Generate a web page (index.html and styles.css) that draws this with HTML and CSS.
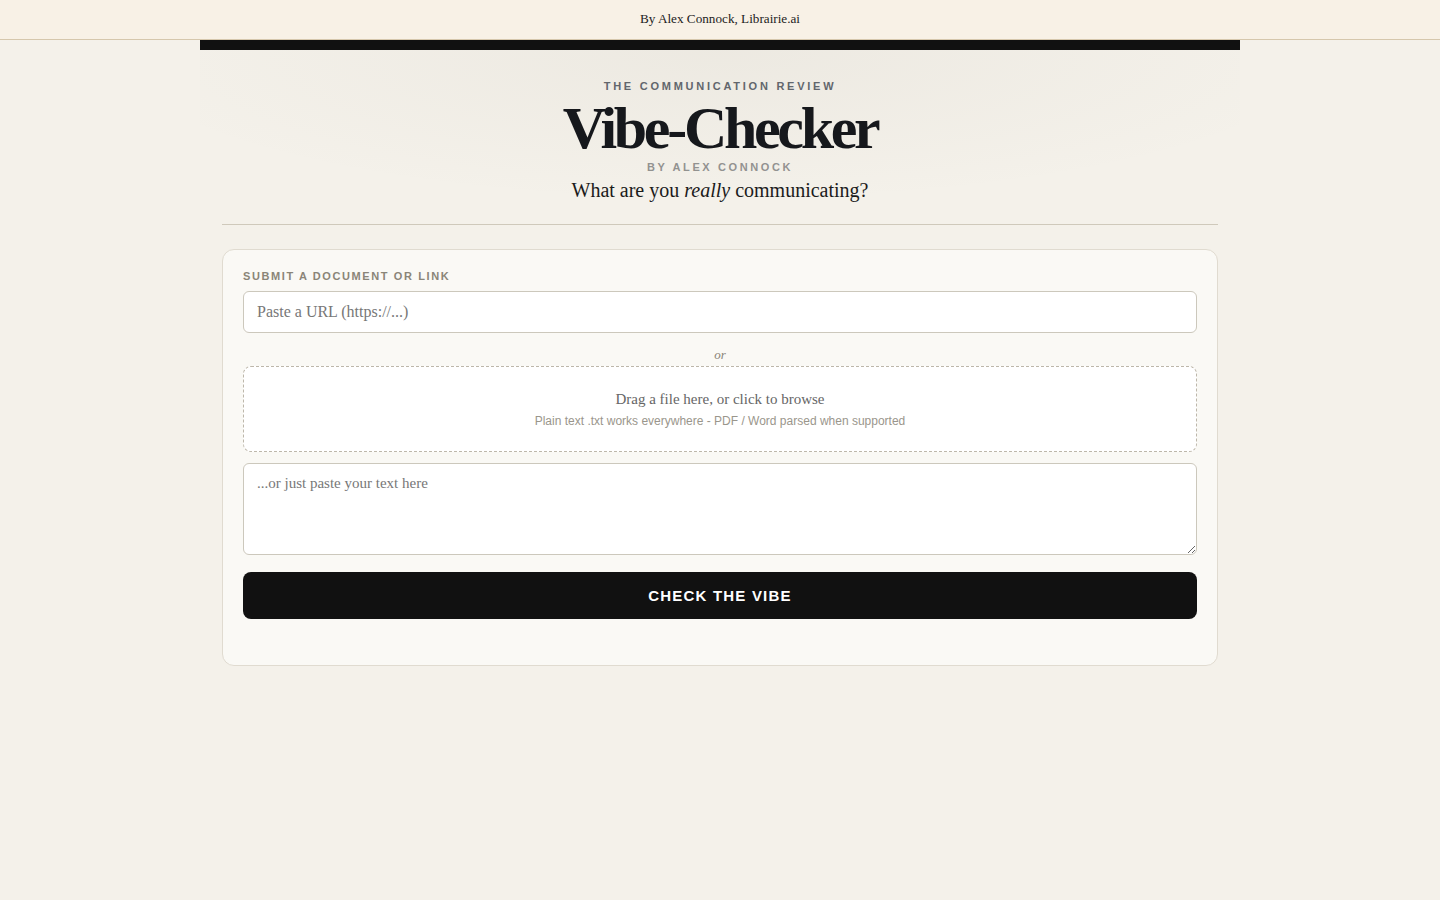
FILE: index.html
```html
<!DOCTYPE html>
<html lang="en">
<head>
    <meta charset="UTF-8">
    <meta name="viewport" content="width=device-width, initial-scale=1.0">
    <title>Vibe-Checker</title>
    <link rel="stylesheet" href="styles.css">
</head>
<body>
    <div class="topbar">By Alex Connock, Librairie.ai</div>

    <div class="page">
        <div class="rule-bar"></div>

        <div class="container">
            <header class="masthead">
                <div class="kicker">The Communication Review</div>
                <h1 class="title">Vibe-Checker</h1>
                <div class="byline">By Alex Connock</div>
                <p class="tagline">What are you <em>really</em> communicating?</p>
            </header>

            <hr class="divider">

            <form class="card" onsubmit="return false;">
                <label class="field-label" for="urlInput">Submit a document or link</label>
                <input class="url-input" id="urlInput" type="text" placeholder="Paste a URL (https://...)">

                <div class="or">or</div>

                <div class="dropzone" id="dropzone">
                    <div class="drop-main">Drag a file here, or click to browse</div>
                    <div class="drop-sub">Plain text .txt works everywhere - PDF / Word parsed when supported</div>
                </div>

                <textarea class="text-input" placeholder="...or just paste your text here"></textarea>

                <button class="check-btn" type="submit">Check the Vibe</button>

                <div class="status" id="status"></div>
            </form>
        </div>
    </div>
</body>
</html>
```

FILE: styles.css
```css
* {
    margin: 0;
    padding: 0;
    box-sizing: border-box;
}

body {
    font-family: "Liberation Serif", "Times New Roman", serif;
    background: #f4f1ea;
    color: #16181c;
}

.topbar {
    height: 40px;
    line-height: 37px;
    text-align: center;
    font-size: 13.2px;
    color: #222;
    background: #f8f1e6;
    border-bottom: 1px solid #d6c7ac;
}

.page {
    width: 1040px;
    margin: 0 auto;
}

.rule-bar {
    height: 10px;
    background: #111;
}

.container {
    padding: 0 22px;
}

.masthead {
    text-align: center;
    padding-top: 29px;
    margin: 0 -22px;
    background: radial-gradient(ellipse 60% 100% at 50% 0%, rgba(120, 110, 90, 0.06), rgba(120, 110, 90, 0) 100%);
}

.kicker {
    font-family: "Liberation Sans", Arial, sans-serif;
    font-size: 11px;
    line-height: 14px;
    font-weight: 700;
    letter-spacing: 2.75px;
    text-transform: uppercase;
    color: #62666c;
}

.title {
    font-size: 60px;
    line-height: 60px;
    font-weight: 700;
    letter-spacing: -0.055em;
    color: #16181c;
    margin-top: 5px;
}

.byline {
    font-family: "Liberation Sans", Arial, sans-serif;
    font-size: 11px;
    line-height: 14px;
    font-weight: 700;
    letter-spacing: 2.6px;
    text-transform: uppercase;
    color: #929290;
    margin-top: 2px;
}

.tagline {
    font-size: 20px;
    line-height: 26px;
    color: #1b1b1b;
    margin-top: 3px;
}

.divider {
    border: none;
    border-top: 1px solid #cfc9bb;
    margin-top: 21px;
}

.card {
    margin-top: 24px;
    background: #faf9f5;
    border: 1px solid #e0dbd0;
    border-radius: 12px;
    padding: 20px 20px 21px;
    display: flex;
    flex-direction: column;
}

.field-label {
    font-family: "Liberation Sans", Arial, sans-serif;
    font-size: 11px;
    line-height: 13px;
    font-weight: 700;
    letter-spacing: 1.6px;
    text-transform: uppercase;
    color: #8a8578;
    margin-bottom: 8px;
}

.url-input {
    height: 42px;
    padding: 10px 13px;
    font-family: inherit;
    font-size: 16px;
    line-height: 20px;
    color: #222;
    background: #fff;
    border: 1px solid #ccc8bc;
    border-radius: 6px;
    outline: none;
}

.url-input::placeholder,
.text-input::placeholder {
    color: #777;
}

.or {
    text-align: center;
    font-size: 13px;
    line-height: 15px;
    font-style: italic;
    color: #8a8578;
    margin: 14px 0 4px;
}

.dropzone {
    background: #fff;
    border: 1px dashed #bdb7aa;
    border-radius: 8px;
    padding: 23px 20px 22px;
    text-align: center;
    cursor: pointer;
}

.drop-main {
    font-size: 15px;
    line-height: 18px;
    color: #666;
}

.drop-sub {
    font-family: "Liberation Sans", Arial, sans-serif;
    font-size: 12px;
    line-height: 16px;
    color: #9a968c;
    margin-top: 5px;
}

.text-input {
    margin-top: 11px;
    height: 92px;
    padding: 10px 13px;
    font-family: inherit;
    font-size: 15px;
    line-height: 18px;
    color: #222;
    background: #fff;
    border: 1px solid #ccc8bc;
    border-radius: 6px;
    outline: none;
    resize: vertical;
}

.check-btn {
    margin-top: 17px;
    height: 47px;
    background: #111;
    color: #fff;
    border: none;
    border-radius: 8px;
    font-family: "Liberation Sans", Arial, sans-serif;
    font-size: 15px;
    font-weight: 700;
    letter-spacing: 1.2px;
    text-transform: uppercase;
    cursor: pointer;
}

.status {
    min-height: 25px;
}
```
